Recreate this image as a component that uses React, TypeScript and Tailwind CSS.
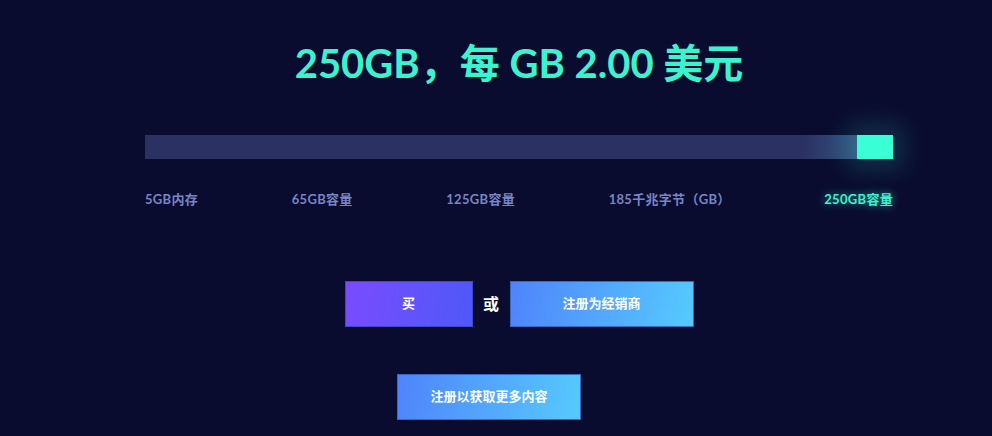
import React from "react";

const latin = "font-['Lato','Noto_Sans_CJK_SC',sans-serif]";

export default function App() {
  const labels = ["5GB内存", "65GB容量", "125GB容量", "185千兆字节（GB）", "250GB容量"];
  return (
    <div className={`w-[992px] h-[436px] bg-[#0a0c2f] overflow-hidden ${latin}`}>
      <div className="ml-[145px] w-[748px] flex flex-col items-center">
        <h1 className="mt-[40px] h-[46px] leading-[46px] text-[40px] font-bold text-[#3cf3d0] tracking-[0px] whitespace-nowrap">
          250GB，每 GB 2.00 美元
        </h1>
        <div className="mt-[49px] w-full h-[24px] relative bg-[linear-gradient(to_right,#2b3163_0%,#2b3163_88%,#33517e_95%)]">
          <div className="absolute right-0 top-0 h-[24px] w-[36px] bg-[#3affd6] shadow-[0_0_26px_10px_rgba(58,255,214,0.16)]" />
        </div>
        <div className="mt-[32px] w-full flex justify-between text-[13px] font-bold leading-[16px] tracking-[0.3px]">
          {labels.map((l, i) => (
            <span
              key={l}
              className={
                i === 4
                  ? "text-[#3cf3d0] [text-shadow:0_0_8px_rgba(58,255,214,0.6)]"
                  : "text-[#7885c4]"
              }
            >
              {l}
            </span>
          ))}
        </div>
        <div className="mt-[74px] flex items-center">
          <button className="w-[128px] h-[46px] bg-[linear-gradient(100deg,#7a4bff,#4f59f7)] text-white text-[13px] font-bold border border-[#3d47c8]">
            买
          </button>
          <span className="w-[37px] text-center text-white text-[16px] font-bold">或</span>
          <button className="w-[184px] h-[46px] bg-[linear-gradient(100deg,#4f84fb,#56cafe)] text-white text-[13px] font-bold border border-[#3767c4]">
            注册为经销商
          </button>
        </div>
        <button className="self-start ml-[252px] mt-[47px] w-[184px] h-[46px] bg-[linear-gradient(100deg,#4f84fb,#56cafe)] text-white text-[13px] font-bold border border-[#3767c4]">
          注册以获取更多内容
        </button>
      </div>
    </div>
  );
}
